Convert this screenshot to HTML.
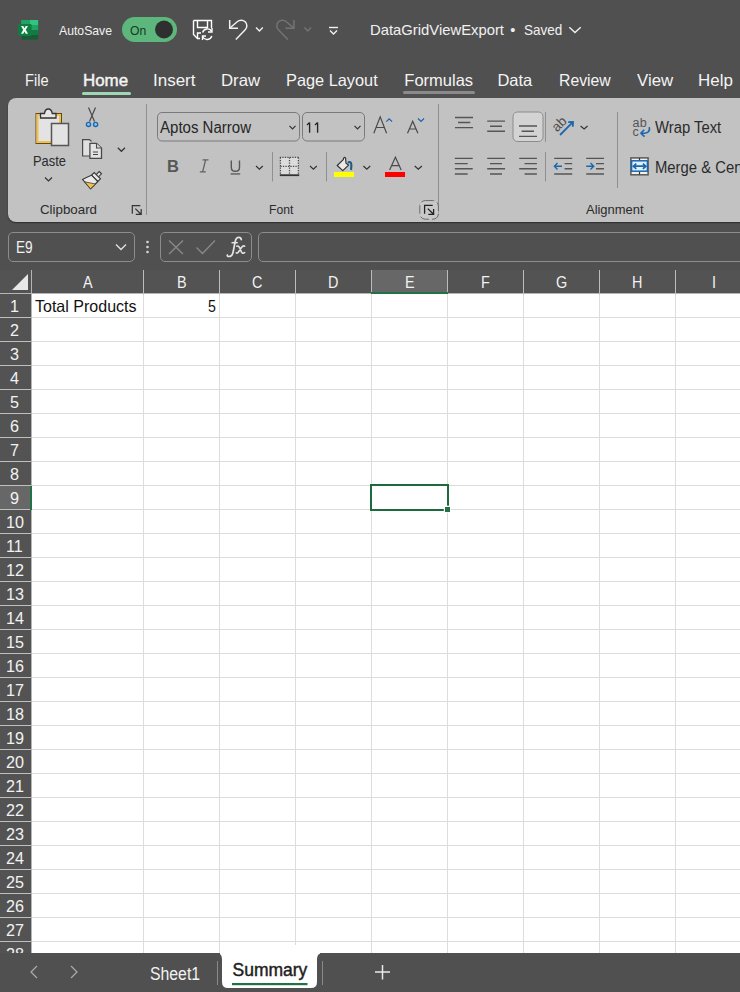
<!DOCTYPE html>
<html><head><meta charset="utf-8">
<style>
*{box-sizing:border-box;margin:0;padding:0}
html,body{width:740px;height:992px;overflow:hidden;background:#505050;font-family:"Liberation Sans",sans-serif}
.abs{position:absolute}
.t{position:absolute;white-space:nowrap;line-height:1;transform-origin:0 0}
</style></head><body>
<!-- ribbon panel -->
<div class="abs" style="left:8px;top:98px;width:760px;height:124px;background:#c2c2c2;border-radius:8px;box-shadow:0 1px 1.5px rgba(0,0,0,0.45)"></div>
<!-- tab underlines -->
<div class="abs" style="left:82px;top:92px;width:49px;height:3px;background:#9fd6b3;border-radius:2px"></div>
<div class="abs" style="left:403px;top:91px;width:72px;height:3px;background:#8a8a8a;border-radius:2px"></div>

<!-- formula bar boxes -->
<div class="abs" style="left:8px;top:232px;width:127px;height:30px;border:1px solid #8c8c8c;border-radius:5px"></div>
<div class="abs" style="left:160px;top:232px;width:92px;height:30px;border:1px solid #8c8c8c;border-radius:5px"></div>
<div class="abs" style="left:258px;top:232px;width:500px;height:30px;border:1px solid #8c8c8c;border-radius:5px"></div>

<svg class="abs" style="left:0;top:270px" width="740" height="683" viewBox="0 0 740 683">
<rect x="0" y="0" width="740" height="23" fill="#535353"/>
<rect x="372" y="0" width="75" height="23" fill="#676767"/>
<rect x="0" y="23" width="31" height="660" fill="#535353"/>
<rect x="0" y="216" width="31" height="24" fill="#676767"/>
<rect x="32" y="24" width="708" height="659" fill="#fff"/>
<line x1="32" x2="740" y1="47.5" y2="47.5" stroke="#dcdcdc"/>
<line x1="0" x2="31" y1="47.5" y2="47.5" stroke="#bfbfbf"/>
<line x1="32" x2="740" y1="71.5" y2="71.5" stroke="#dcdcdc"/>
<line x1="0" x2="31" y1="71.5" y2="71.5" stroke="#bfbfbf"/>
<line x1="32" x2="740" y1="95.5" y2="95.5" stroke="#dcdcdc"/>
<line x1="0" x2="31" y1="95.5" y2="95.5" stroke="#bfbfbf"/>
<line x1="32" x2="740" y1="119.5" y2="119.5" stroke="#dcdcdc"/>
<line x1="0" x2="31" y1="119.5" y2="119.5" stroke="#bfbfbf"/>
<line x1="32" x2="740" y1="143.5" y2="143.5" stroke="#dcdcdc"/>
<line x1="0" x2="31" y1="143.5" y2="143.5" stroke="#bfbfbf"/>
<line x1="32" x2="740" y1="167.5" y2="167.5" stroke="#dcdcdc"/>
<line x1="0" x2="31" y1="167.5" y2="167.5" stroke="#bfbfbf"/>
<line x1="32" x2="740" y1="191.5" y2="191.5" stroke="#dcdcdc"/>
<line x1="0" x2="31" y1="191.5" y2="191.5" stroke="#bfbfbf"/>
<line x1="32" x2="740" y1="215.5" y2="215.5" stroke="#dcdcdc"/>
<line x1="0" x2="31" y1="215.5" y2="215.5" stroke="#bfbfbf"/>
<line x1="32" x2="740" y1="239.5" y2="239.5" stroke="#dcdcdc"/>
<line x1="0" x2="31" y1="239.5" y2="239.5" stroke="#bfbfbf"/>
<line x1="32" x2="740" y1="263.5" y2="263.5" stroke="#dcdcdc"/>
<line x1="0" x2="31" y1="263.5" y2="263.5" stroke="#bfbfbf"/>
<line x1="32" x2="740" y1="287.5" y2="287.5" stroke="#dcdcdc"/>
<line x1="0" x2="31" y1="287.5" y2="287.5" stroke="#bfbfbf"/>
<line x1="32" x2="740" y1="311.5" y2="311.5" stroke="#dcdcdc"/>
<line x1="0" x2="31" y1="311.5" y2="311.5" stroke="#bfbfbf"/>
<line x1="32" x2="740" y1="335.5" y2="335.5" stroke="#dcdcdc"/>
<line x1="0" x2="31" y1="335.5" y2="335.5" stroke="#bfbfbf"/>
<line x1="32" x2="740" y1="359.5" y2="359.5" stroke="#dcdcdc"/>
<line x1="0" x2="31" y1="359.5" y2="359.5" stroke="#bfbfbf"/>
<line x1="32" x2="740" y1="383.5" y2="383.5" stroke="#dcdcdc"/>
<line x1="0" x2="31" y1="383.5" y2="383.5" stroke="#bfbfbf"/>
<line x1="32" x2="740" y1="407.5" y2="407.5" stroke="#dcdcdc"/>
<line x1="0" x2="31" y1="407.5" y2="407.5" stroke="#bfbfbf"/>
<line x1="32" x2="740" y1="431.5" y2="431.5" stroke="#dcdcdc"/>
<line x1="0" x2="31" y1="431.5" y2="431.5" stroke="#bfbfbf"/>
<line x1="32" x2="740" y1="455.5" y2="455.5" stroke="#dcdcdc"/>
<line x1="0" x2="31" y1="455.5" y2="455.5" stroke="#bfbfbf"/>
<line x1="32" x2="740" y1="479.5" y2="479.5" stroke="#dcdcdc"/>
<line x1="0" x2="31" y1="479.5" y2="479.5" stroke="#bfbfbf"/>
<line x1="32" x2="740" y1="503.5" y2="503.5" stroke="#dcdcdc"/>
<line x1="0" x2="31" y1="503.5" y2="503.5" stroke="#bfbfbf"/>
<line x1="32" x2="740" y1="527.5" y2="527.5" stroke="#dcdcdc"/>
<line x1="0" x2="31" y1="527.5" y2="527.5" stroke="#bfbfbf"/>
<line x1="32" x2="740" y1="551.5" y2="551.5" stroke="#dcdcdc"/>
<line x1="0" x2="31" y1="551.5" y2="551.5" stroke="#bfbfbf"/>
<line x1="32" x2="740" y1="575.5" y2="575.5" stroke="#dcdcdc"/>
<line x1="0" x2="31" y1="575.5" y2="575.5" stroke="#bfbfbf"/>
<line x1="32" x2="740" y1="599.5" y2="599.5" stroke="#dcdcdc"/>
<line x1="0" x2="31" y1="599.5" y2="599.5" stroke="#bfbfbf"/>
<line x1="32" x2="740" y1="623.5" y2="623.5" stroke="#dcdcdc"/>
<line x1="0" x2="31" y1="623.5" y2="623.5" stroke="#bfbfbf"/>
<line x1="32" x2="740" y1="647.5" y2="647.5" stroke="#dcdcdc"/>
<line x1="0" x2="31" y1="647.5" y2="647.5" stroke="#bfbfbf"/>
<line x1="32" x2="740" y1="671.5" y2="671.5" stroke="#dcdcdc"/>
<line x1="0" x2="31" y1="671.5" y2="671.5" stroke="#bfbfbf"/>
<line x1="143.5" x2="143.5" y1="24" y2="683" stroke="#dcdcdc"/>
<line x1="143.5" x2="143.5" y1="0" y2="23" stroke="#bcbcbc"/>
<line x1="219.5" x2="219.5" y1="24" y2="683" stroke="#dcdcdc"/>
<line x1="219.5" x2="219.5" y1="0" y2="23" stroke="#bcbcbc"/>
<line x1="295.5" x2="295.5" y1="24" y2="683" stroke="#dcdcdc"/>
<line x1="295.5" x2="295.5" y1="0" y2="23" stroke="#bcbcbc"/>
<line x1="371.5" x2="371.5" y1="24" y2="683" stroke="#dcdcdc"/>
<line x1="371.5" x2="371.5" y1="0" y2="23" stroke="#bcbcbc"/>
<line x1="447.5" x2="447.5" y1="24" y2="683" stroke="#dcdcdc"/>
<line x1="447.5" x2="447.5" y1="0" y2="23" stroke="#bcbcbc"/>
<line x1="523.5" x2="523.5" y1="24" y2="683" stroke="#dcdcdc"/>
<line x1="523.5" x2="523.5" y1="0" y2="23" stroke="#bcbcbc"/>
<line x1="599.5" x2="599.5" y1="24" y2="683" stroke="#dcdcdc"/>
<line x1="599.5" x2="599.5" y1="0" y2="23" stroke="#bcbcbc"/>
<line x1="675.5" x2="675.5" y1="24" y2="683" stroke="#dcdcdc"/>
<line x1="675.5" x2="675.5" y1="0" y2="23" stroke="#bcbcbc"/>
<line x1="31.5" x2="31.5" y1="0" y2="683" stroke="#b5b5b5"/>
<line x1="0" x2="740" y1="23.5" y2="23.5" stroke="#b5b5b5"/>
<polygon points="12,20 28,20 28,4" fill="#e8e8e8"/>
<rect x="371" y="22" width="77" height="2" fill="#217346"/>
<rect x="30" y="216" width="2" height="24" fill="#217346"/>
<rect x="371" y="215" width="77" height="25" fill="none" stroke="#1d6b3d" stroke-width="2"/>
<rect x="443.8" y="235.7" width="7" height="7" fill="#fff"/>
<rect x="445" y="237" width="5" height="5" fill="#217346"/>
</svg>

<!-- sheet tab bar -->
<svg class="abs" style="left:0;top:945px;z-index:5" width="740" height="47" viewBox="0 945 740 47">
<rect x="220" y="945" width="100" height="45" fill="#fff"/>
<path d="M0 953 H216 Q222 953 222 959 V982 Q222 988 228 988 H311 Q317 988 317 982 V959 Q317 953 323 953 H740 V992 H0 Z" fill="#505050"/>
<line x1="217.5" y1="961" x2="217.5" y2="985" stroke="#8a8a8a" stroke-width="1"/>
<line x1="322.5" y1="961" x2="322.5" y2="985" stroke="#8a8a8a" stroke-width="1"/>
<rect x="232" y="983" width="75.5" height="2.2" fill="#1f7244"/>
<path d="M37 966 L31 972 L37 978" fill="none" stroke="#a8a8a8" stroke-width="1.3"/>
<path d="M71 966 L77 972 L71 978" fill="none" stroke="#a8a8a8" stroke-width="1.3"/>
<path d="M375 972 H390 M382.5 965 V979.5" stroke="#e8e8e8" stroke-width="1.5"/>
</svg>

<!-- title bar + ribbon icons (page coords) -->
<svg class="abs" style="left:0;top:0" width="740" height="270" viewBox="0 0 740 270">
<!-- excel logo -->
<rect x="21.5" y="20" width="16.7" height="19.7" rx="1.2" fill="#185c37"/>
<rect x="21.5" y="20" width="16.7" height="5" fill="#33c481"/>
<rect x="21.5" y="20" width="8.5" height="5" fill="#21a366"/>
<rect x="21.5" y="25" width="16.7" height="5" fill="#21a366"/>
<rect x="21.5" y="30" width="16.7" height="5" fill="#107c41"/>
<rect x="17.9" y="23.9" width="13.7" height="12" rx="1.3" fill="#107c41"/>
<path d="M21 25.9 H23.3 L24.5 28.2 L25.7 25.9 H28 L25.8 29.8 L28 33.8 H25.7 L24.5 31.4 L23.3 33.8 H21 L23.2 29.8 Z" fill="#f0fff5"/>
<!-- toggle -->
<rect x="122" y="17" width="55" height="25" rx="12.5" fill="#5db67b"/>
<circle cx="164" cy="29.5" r="9" fill="#2f2f2f"/>
<!-- save icon -->
<path d="M193.5 20.5 H211.5 V28 M193.5 20.5 V34.5 L197.5 38.5 H200" fill="none" stroke="#fff" stroke-width="1.4"/>
<path d="M197.5 20.5 V27.5 H207.5 V20.5" fill="none" stroke="#fff" stroke-width="1.4"/>
<path d="M197.5 38.5 V33 H201" fill="none" stroke="#fff" stroke-width="1.4"/>
<path d="M202.6 32.5 A5 5 0 0 1 211.5 31" fill="none" stroke="#fff" stroke-width="1.4"/>
<path d="M211.8 36 A5 5 0 0 1 202.7 37" fill="none" stroke="#fff" stroke-width="1.4"/>
<path d="M212 28 V32 H208" fill="none" stroke="#fff" stroke-width="1.4"/>
<path d="M202.5 40 V36 H206" fill="none" stroke="#fff" stroke-width="1.4"/>
<!-- undo -->
<path d="M229.7 20 V28.2 H238" fill="none" stroke="#f0f0f0" stroke-width="1.5"/>
<path d="M230.2 27.7 L237.2 21.8 A5.6 5.6 0 0 1 245.2 29.76 L235.8 39.4" fill="none" stroke="#f0f0f0" stroke-width="1.5"/>
<path d="M256 27.6 L259.4 31 L262.8 27.6" fill="none" stroke="#f0f0f0" stroke-width="1.4"/>
<!-- redo (disabled) -->
<g transform="translate(523.6 0) scale(-1 1)">
<path d="M229.7 20 V28.2 H238" fill="none" stroke="#747474" stroke-width="1.5"/>
<path d="M230.2 27.7 L237.2 21.8 A5.6 5.6 0 0 1 245.2 29.76 L235.8 39.4" fill="none" stroke="#747474" stroke-width="1.5"/>
</g>
<path d="M304.5 27.6 L307.8 31 L311.1 27.6" fill="none" stroke="#747474" stroke-width="1.4"/>
<!-- customize -->
<path d="M329 27.5 H338" stroke="#f0f0f0" stroke-width="1.4"/>
<path d="M330 30.5 L333.5 34 L337 30.5" fill="none" stroke="#f0f0f0" stroke-width="1.4"/>
<!-- title chevron -->
<path d="M569.3 27.2 L575 32.6 L580.7 27.2" fill="none" stroke="#f0f0f0" stroke-width="1.4"/>

<!-- ===== Clipboard group ===== -->
<rect x="36" y="113.5" width="25.5" height="30" fill="#e3e3e3" stroke="#5e4a1e" stroke-width="1"/>
<rect x="37.5" y="115" width="22.5" height="27" fill="none" stroke="#f1c04a" stroke-width="2"/>
<rect x="39" y="116.5" width="19.5" height="24" fill="#e3e3e3"/>
<path d="M40.5 118 V113.5 H44.5 Q45 109 48.3 109 Q51.6 109 52.2 113.5 H56 V118 Z" fill="#e6e6e6" stroke="#333" stroke-width="1.3"/>
<rect x="51.5" y="123.5" width="17" height="22" fill="#e3e3e3" stroke="#555" stroke-width="1.5"/>
<!-- paste chevron -->
<path d="M45 177.5 L48.5 181 L52 177.5" fill="none" stroke="#333" stroke-width="1.2"/>
<!-- scissors -->
<path d="M88.5 107.5 L94.5 121.5 M95.5 107.5 L89.5 121.5" stroke="#4a4a4a" stroke-width="1.2"/>
<circle cx="88.5" cy="124.4" r="2.1" fill="#7ec8ff" stroke="#1b67ab" stroke-width="1.3"/>
<circle cx="95.6" cy="124.4" r="2.1" fill="#7ec8ff" stroke="#1b67ab" stroke-width="1.3"/>
<!-- copy -->
<path d="M90 156 H82.6 V139.6 H89.5 L91.5 141.5" fill="#e0e0e0" stroke="#4a4a4a" stroke-width="1.2"/>
<path d="M89.9 143.3 H96.5 L101.5 148 V158.3 H89.9 Z" fill="#e3e3e3" stroke="#4a4a4a" stroke-width="1.3"/>
<path d="M96.5 143.5 V148 H101.3" fill="#d8d8d8" stroke="#4a4a4a" stroke-width="1.1"/>
<path d="M93 152 H98 M93 154.5 H98" stroke="#444" stroke-width="1"/>
<path d="M117.8 147.8 L121.4 151.3 L125 147.8" fill="none" stroke="#333" stroke-width="1.2"/>
<!-- format painter -->
<path d="M99.2 171.5 L101.5 173.8 L97.5 177.8 L95.2 175.5 Z" fill="#e6e6e6" stroke="#3a3a3a" stroke-width="1.1"/>
<path d="M91.5 175.2 L94.2 172.5 L100.5 178.8 L97.8 181.5 Z" fill="#e6e6e6" stroke="#3a3a3a" stroke-width="1.1"/>
<path d="M91.5 175.2 Q86 177.5 82.5 179.4 L90.5 188.8 Q94.5 185 97.8 181.5 Z" fill="#e9e9e9" stroke="#3a3a3a" stroke-width="1.1"/>
<path d="M84.6 181.8 L95.5 184 L90.5 188.8 Z" fill="#f2c14e" stroke="#3a3a3a" stroke-width="0.8"/>
<!-- launcher -->
<path d="M132.3 213.8 V205.6 H140.3 M135.3 208.6 L140.8 214 M135.8 214.3 H141.2 V209" fill="none" stroke="#333" stroke-width="1.2"/>
<!-- separators -->
<line x1="146.5" y1="104" x2="146.5" y2="215" stroke="#8f8f8f"/>
<line x1="438.5" y1="104" x2="438.5" y2="214.6" stroke="#8f8f8f"/>
<line x1="617.5" y1="112" x2="617.5" y2="188" stroke="#8f8f8f"/>

<!-- ===== Font group ===== -->
<rect x="157.5" y="112.5" width="142" height="28.5" rx="4.5" fill="none" stroke="#7a7a7a"/>
<path d="M289.5 125.8 L292.5 128.8 L295.5 125.8" fill="none" stroke="#333" stroke-width="1.2"/>
<rect x="302.5" y="112.5" width="62" height="28.5" rx="4.5" fill="none" stroke="#7a7a7a"/>
<path d="M309.6 122.4 V132.8 M306.9 124.8 Q308.6 124 309.6 122.4 M317.6 122.4 V132.8 M314.9 124.8 Q316.6 124 317.6 122.4" fill="none" stroke="#262626" stroke-width="1.35"/>
<path d="M354.5 125.8 L357.5 128.8 L360.5 125.8" fill="none" stroke="#333" stroke-width="1.2"/>
<!-- grow/shrink -->
<path d="M373.8 133.2 L380.2 116.8 L386.6 133.2 M376.2 127.5 H384.2" fill="none" stroke="#4a4a4a" stroke-width="1.2"/>
<path d="M386.3 121.6 L389.2 118.8 L392.1 121.6" fill="none" stroke="#1b67ab" stroke-width="1.3"/>
<path d="M407.5 133.2 L412.7 121.2 L417.9 133.2 M409.5 129 H416" fill="none" stroke="#4a4a4a" stroke-width="1.2"/>
<path d="M418 118.5 L421 121.4 L424 118.5" fill="none" stroke="#1b67ab" stroke-width="1.3"/>
<!-- B I U -->
<text x="167" y="171.9" font-family="Liberation Sans" font-weight="bold" font-size="16.5" fill="#575757">B</text>
<path d="M202.5 159.8 H208.5 M199.8 171.8 H205.8 M205.6 159.8 L202.6 171.8" fill="none" stroke="#626262" stroke-width="1.3"/>
<path d="M231.3 160.4 V167.5 Q231.3 171.3 235.4 171.3 Q239.5 171.3 239.5 167.5 V160.4" fill="none" stroke="#575757" stroke-width="1.4"/>
<rect x="230.6" y="173.3" width="9.6" height="1.3" fill="#575757"/>
<path d="M256 166 L259.4 169.2 L262.8 166" fill="none" stroke="#333" stroke-width="1.2"/>
<line x1="272.5" y1="152" x2="272.5" y2="181.5" stroke="#8f8f8f"/>
<!-- borders -->
<rect x="280.5" y="157.5" width="18" height="17.5" fill="#dcdcdc"/>
<g fill="none" stroke="#4a4a4a" stroke-width="1.3" stroke-dasharray="1.3 1.2">
<path d="M279.8 157.4 H299.5 M280.4 157.4 V175 M298.4 157.4 V175 M289.5 157.4 V175 M280.4 166.3 H298.4"/>
</g>
<rect x="279.8" y="174.3" width="19.4" height="1.8" fill="#333"/>
<path d="M310 166 L313.4 169.2 L316.8 166" fill="none" stroke="#333" stroke-width="1.2"/>
<line x1="326.5" y1="152" x2="326.5" y2="181.5" stroke="#8f8f8f"/>
<!-- fill color -->
<path d="M337.2 165.5 L343.3 159.6 L343.6 158.2 Q344.6 156.6 345.6 158.2 L346 163.3 L348.6 165.1 L342.8 170.6 Z" fill="#e9e9e9" stroke="#333" stroke-width="1.2" stroke-linejoin="round"/>
<path d="M348.6 162.3 Q351.3 161.2 351.4 165.5 L351.1 169.2" fill="none" stroke="#1b5a8c" stroke-width="2.1" stroke-linecap="round"/>
<rect x="334" y="172" width="20" height="5" fill="#ffff00"/>
<path d="M363.4 166 L366.8 169.2 L370.2 166" fill="none" stroke="#333" stroke-width="1.2"/>
<!-- font color -->
<path d="M389.6 169.9 L395.4 157.3 L401.2 169.9 M391.8 165.6 H399" fill="none" stroke="#4a4a4a" stroke-width="1.2"/>
<rect x="385" y="172" width="20" height="5" fill="#ff0000"/>
<path d="M414.7 166 L418.3 169.2 L421.9 166" fill="none" stroke="#333" stroke-width="1.2"/>
<!-- font launcher w/ focus ring -->
<rect x="419.8" y="200.6" width="18.6" height="18.6" rx="5.5" fill="#c9c9c9" stroke="#6a6a6a" stroke-width="1" stroke-dasharray="9 3"/>
<path d="M424.6 213.8 V205.4 H432.7 M427.8 208.6 L433.3 214 M428.3 214.3 H433.6 V209" fill="none" stroke="#222" stroke-width="1.3"/>

<!-- ===== Alignment group ===== -->
<g stroke="#555" stroke-width="1.4">
<path d="M455 117.5 H473 M458 122.5 H470.3 M455 127.6 H473"/>
<path d="M487.2 121.1 H505 M490 126.2 H502 M487.2 131.2 H505"/>
</g>
<rect x="513" y="112" width="30" height="29.5" rx="4.5" fill="#d3d3d3" stroke="#8c8c8c"/>
<g stroke="#555" stroke-width="1.4">
<path d="M519 126 H537 M521.6 131.2 H534 M519 136.4 H537"/>
<path d="M454.8 158.4 H472.7 M454.8 163.6 H467.7 M454.8 168.8 H472.7 M454.8 174 H467.7"/>
<path d="M487.2 158.4 H505.1 M490 163.6 H502 M487.2 168.8 H505.1 M490 174 H502"/>
<path d="M519.2 158.4 H536.9 M524.6 163.6 H536.9 M519.2 168.8 H536.9 M524.6 174 H536.9"/>
<path d="M554.2 158.4 H572.2 M564.6 163.6 H572.2 M564.6 168.8 H572.2 M554.2 174 H572.2"/>
<path d="M586.2 158.4 H604 M596 163.6 H604 M596 168.8 H604 M586.2 174 H604"/>
</g>
<line x1="545.5" y1="112" x2="545.5" y2="142" stroke="#8f8f8f"/>
<line x1="545.5" y1="152" x2="545.5" y2="181.5" stroke="#8f8f8f"/>
<path d="M562 166.2 H554.5 M557.5 163 L554.4 166.2 L557.5 169.4" fill="none" stroke="#1b67ab" stroke-width="1.4"/>
<path d="M586.2 166.2 H593.6 M590.5 163 L593.7 166.2 L590.5 169.4" fill="none" stroke="#1b67ab" stroke-width="1.4"/>
<!-- orientation ab -->
<text x="0" y="0" font-family="Liberation Sans" font-size="13.5" fill="#505050" transform="translate(557,132.5) rotate(-45)">ab</text>
<path d="M560 135 L572.3 122.7" fill="none" stroke="#1b67ab" stroke-width="1.8"/>
<path d="M568.2 122.2 L573 121.9 L572.8 126.8" fill="none" stroke="#1b67ab" stroke-width="1.8"/>
<path d="M580.6 126 L584.1 129 L587.6 126" fill="none" stroke="#333" stroke-width="1.2"/>
<!-- wrap text icon -->
<text x="632.6" y="126.5" font-family="Liberation Sans" font-size="12.5" letter-spacing="0.3" fill="#555">ab</text>
<text x="632.6" y="135.6" font-family="Liberation Sans" font-size="12.5" fill="#555">c</text>
<path d="M649.3 127.2 Q650.5 133 644.5 133.2 H641.2 M644.2 129.8 L640.9 133.2 L644.5 136.6" fill="none" stroke="#1b67ab" stroke-width="1.6"/>
<!-- merge icon -->
<rect x="630.9" y="157.9" width="17.2" height="16.9" fill="#f0f0f0" stroke="#5a5a5a" stroke-width="1.5"/>
<rect x="631.6" y="160.8" width="15.8" height="10.4" fill="#dff0ff" stroke="#1b67ab" stroke-width="1.5"/>
<path d="M639.5 158 V160 M639.5 172 V174.5" stroke="#333" stroke-width="1.2"/>
<path d="M633.5 166.2 H645.7 M636.3 163.6 L633.4 166.2 L636.3 168.8 M642.9 163.6 L645.8 166.2 L642.9 168.8" fill="none" stroke="#1b67ab" stroke-width="1.7"/>

<!-- formula bar icons -->
<circle cx="147.5" cy="242" r="1.3" fill="#d8d8d8"/>
<circle cx="147.5" cy="247" r="1.3" fill="#d8d8d8"/>
<circle cx="147.5" cy="252" r="1.3" fill="#d8d8d8"/>
<path d="M169 240.5 L183 254 M183 240.5 L169 254" stroke="#8a8a8a" stroke-width="1.3"/>
<path d="M196.5 247.5 L202.5 253.5 L215 240.5" fill="none" stroke="#8a8a8a" stroke-width="1.3"/>
<path d="M241.3 239.6 Q241 237.2 238.4 237.4 Q235.9 237.7 235.1 241.8 L233.1 252.2 Q232.2 256.6 228.8 256.5 Q227.1 256.4 227.3 255" fill="none" stroke="#e6e6e6" stroke-width="1.7" stroke-linecap="round"/>
<path d="M231.5 242.7 H237.8" stroke="#e6e6e6" stroke-width="1.5"/>
<path d="M236.8 246.2 Q238.8 245.2 240 248.5 L241.4 251.8 Q242.6 254.2 244.6 252.6 M244.6 246.2 Q243.2 245.3 241.5 247.5 L239 251.2 Q237.6 253.8 236.3 252.8" fill="none" stroke="#e6e6e6" stroke-width="1.6" stroke-linecap="round"/>
<!-- name box chevron -->
<path d="M116 244.5 L121 249.5 L126 244.5" fill="none" stroke="#e0e0e0" stroke-width="1.4"/>
</svg>

<div class="t" style="left:59.0px;top:24.07px;font-size:13.5px;color:#f0f0f0;font-weight:normal;transform:scaleX(0.905);">AutoSave</div>
<div class="t" style="left:130.4px;top:24.72px;font-size:12.5px;color:#173a24;font-weight:normal;transform:scaleX(0.972);">On</div>
<div class="t" style="left:369.7px;top:23.33px;font-size:14.5px;color:#f0f0f0;font-weight:normal;transform:scaleX(1.022);">DataGridViewExport</div>
<div class="t" style="left:510.3px;top:23.33px;font-size:14.5px;color:#f0f0f0;font-weight:normal;">•</div>
<div class="t" style="left:523.7px;top:23.33px;font-size:14.5px;color:#f0f0f0;font-weight:normal;transform:scaleX(0.932);">Saved</div>
<div class="t" style="left:24.8px;top:71.53px;font-size:16.5px;color:#f4f4f4;font-weight:normal;transform:scaleX(0.884);">File</div>
<div class="t" style="left:83.0px;top:71.53px;font-size:16.5px;color:#f4f4f4;font-weight:normal;-webkit-text-stroke:0.45px #f4f4f4;transform:scaleX(1.025);">Home</div>
<div class="t" style="left:153.2px;top:71.53px;font-size:16.5px;color:#f4f4f4;font-weight:normal;transform:scaleX(1.030);">Insert</div>
<div class="t" style="left:221.4px;top:71.53px;font-size:16.5px;color:#f4f4f4;font-weight:normal;transform:scaleX(1.016);">Draw</div>
<div class="t" style="left:285.5px;top:71.53px;font-size:16.5px;color:#f4f4f4;font-weight:normal;transform:scaleX(0.990);">Page Layout</div>
<div class="t" style="left:404.3px;top:71.53px;font-size:16.5px;color:#f4f4f4;font-weight:normal;">Formulas</div>
<div class="t" style="left:497.4px;top:71.53px;font-size:16.5px;color:#f4f4f4;font-weight:normal;">Data</div>
<div class="t" style="left:559.3px;top:71.53px;font-size:16.5px;color:#f4f4f4;font-weight:normal;transform:scaleX(0.956);">Review</div>
<div class="t" style="left:637.0px;top:71.53px;font-size:16.5px;color:#f4f4f4;font-weight:normal;transform:scaleX(1.018);">View</div>
<div class="t" style="left:697.8px;top:71.53px;font-size:16.5px;color:#f4f4f4;font-weight:normal;transform:scaleX(1.026);">Help</div>
<div class="t" style="left:33.0px;top:152.80px;font-size:15px;color:#2b2b2b;font-weight:normal;transform:scaleX(0.860);">Paste</div>
<div class="t" style="left:40.3px;top:203.37px;font-size:13.5px;color:#2b2b2b;font-weight:normal;transform:scaleX(0.986);">Clipboard</div>
<div class="t" style="left:269.0px;top:203.37px;font-size:13.5px;color:#2b2b2b;font-weight:normal;transform:scaleX(0.900);">Font</div>
<div class="t" style="left:585.7px;top:203.37px;font-size:13.5px;color:#2b2b2b;font-weight:normal;transform:scaleX(0.958);">Alignment</div>
<div class="t" style="left:160.0px;top:119.56px;font-size:16px;color:#262626;font-weight:normal;transform:scaleX(0.939);">Aptos Narrow</div>
<div class="t" style="left:655.0px;top:119.56px;font-size:16px;color:#2b2b2b;font-weight:normal;transform:scaleX(0.927);">Wrap Text</div>
<div class="t" style="left:655.0px;top:159.86px;font-size:16px;color:#2b2b2b;font-weight:normal;transform:scaleX(0.927);">Merge &amp; Center</div>
<div class="t" style="left:16.0px;top:238.73px;font-size:16.5px;color:#f2f2f2;font-weight:normal;transform:scaleX(0.827);">E9</div>
<div class="t" style="left:35.3px;top:298.03px;font-size:16.5px;color:#111;font-weight:normal;transform:scaleX(0.971);">Total Products</div>
<div class="t" style="left:207.6px;top:298.03px;font-size:16.5px;color:#111;font-weight:normal;transform:scaleX(0.861);">5</div>
<div class="t" style="left:149.5px;top:965.89px;font-size:17.5px;color:#f2f2f2;font-weight:normal;transform:scaleX(0.903);z-index:6;">Sheet1</div>
<div class="t" style="left:232.5px;top:961.69px;font-size:17.5px;color:#1e1e1e;font-weight:normal;z-index:6;-webkit-text-stroke:0.45px #1e1e1e;">Summary</div>
<div class="t" style="left:82.7px;top:275.26px;font-size:16px;color:#f2f2f2;transform:scaleX(0.9)">A</div>
<div class="t" style="left:176.7px;top:275.26px;font-size:16px;color:#f2f2f2;transform:scaleX(0.9)">B</div>
<div class="t" style="left:252.3px;top:275.26px;font-size:16px;color:#f2f2f2;transform:scaleX(0.9)">C</div>
<div class="t" style="left:328.3px;top:275.26px;font-size:16px;color:#f2f2f2;transform:scaleX(0.9)">D</div>
<div class="t" style="left:404.7px;top:275.26px;font-size:16px;color:#f2f2f2;transform:scaleX(0.9)">E</div>
<div class="t" style="left:481.1px;top:275.26px;font-size:16px;color:#f2f2f2;transform:scaleX(0.9)">F</div>
<div class="t" style="left:555.9px;top:275.26px;font-size:16px;color:#f2f2f2;transform:scaleX(0.9)">G</div>
<div class="t" style="left:632.3px;top:275.26px;font-size:16px;color:#f2f2f2;transform:scaleX(0.9)">H</div>
<div class="t" style="left:711.5px;top:275.26px;font-size:16px;color:#f2f2f2;transform:scaleX(0.9)">I</div>
<div class="t" style="left:10.2px;top:297.51px;font-size:17px;color:#f2f2f2;transform:scaleX(0.95)">1</div>
<div class="t" style="left:10.2px;top:321.51px;font-size:17px;color:#f2f2f2;transform:scaleX(0.95)">2</div>
<div class="t" style="left:10.2px;top:345.51px;font-size:17px;color:#f2f2f2;transform:scaleX(0.95)">3</div>
<div class="t" style="left:10.2px;top:369.51px;font-size:17px;color:#f2f2f2;transform:scaleX(0.95)">4</div>
<div class="t" style="left:10.2px;top:393.51px;font-size:17px;color:#f2f2f2;transform:scaleX(0.95)">5</div>
<div class="t" style="left:10.2px;top:417.51px;font-size:17px;color:#f2f2f2;transform:scaleX(0.95)">6</div>
<div class="t" style="left:10.2px;top:441.51px;font-size:17px;color:#f2f2f2;transform:scaleX(0.95)">7</div>
<div class="t" style="left:10.2px;top:465.51px;font-size:17px;color:#f2f2f2;transform:scaleX(0.95)">8</div>
<div class="t" style="left:10.2px;top:489.51px;font-size:17px;color:#f2f2f2;transform:scaleX(0.95)">9</div>
<div class="t" style="left:5.7px;top:513.51px;font-size:17px;color:#f2f2f2;transform:scaleX(0.95)">10</div>
<div class="t" style="left:6.3px;top:537.51px;font-size:17px;color:#f2f2f2;transform:scaleX(0.95)">11</div>
<div class="t" style="left:5.7px;top:561.51px;font-size:17px;color:#f2f2f2;transform:scaleX(0.95)">12</div>
<div class="t" style="left:5.7px;top:585.51px;font-size:17px;color:#f2f2f2;transform:scaleX(0.95)">13</div>
<div class="t" style="left:5.7px;top:609.51px;font-size:17px;color:#f2f2f2;transform:scaleX(0.95)">14</div>
<div class="t" style="left:5.7px;top:633.51px;font-size:17px;color:#f2f2f2;transform:scaleX(0.95)">15</div>
<div class="t" style="left:5.7px;top:657.51px;font-size:17px;color:#f2f2f2;transform:scaleX(0.95)">16</div>
<div class="t" style="left:5.7px;top:681.51px;font-size:17px;color:#f2f2f2;transform:scaleX(0.95)">17</div>
<div class="t" style="left:5.7px;top:705.51px;font-size:17px;color:#f2f2f2;transform:scaleX(0.95)">18</div>
<div class="t" style="left:5.7px;top:729.51px;font-size:17px;color:#f2f2f2;transform:scaleX(0.95)">19</div>
<div class="t" style="left:5.7px;top:753.51px;font-size:17px;color:#f2f2f2;transform:scaleX(0.95)">20</div>
<div class="t" style="left:5.7px;top:777.51px;font-size:17px;color:#f2f2f2;transform:scaleX(0.95)">21</div>
<div class="t" style="left:5.7px;top:801.51px;font-size:17px;color:#f2f2f2;transform:scaleX(0.95)">22</div>
<div class="t" style="left:5.7px;top:825.51px;font-size:17px;color:#f2f2f2;transform:scaleX(0.95)">23</div>
<div class="t" style="left:5.7px;top:849.51px;font-size:17px;color:#f2f2f2;transform:scaleX(0.95)">24</div>
<div class="t" style="left:5.7px;top:873.51px;font-size:17px;color:#f2f2f2;transform:scaleX(0.95)">25</div>
<div class="t" style="left:5.7px;top:897.51px;font-size:17px;color:#f2f2f2;transform:scaleX(0.95)">26</div>
<div class="t" style="left:5.7px;top:921.51px;font-size:17px;color:#f2f2f2;transform:scaleX(0.95)">27</div>
<div class="t" style="left:5.7px;top:945.51px;font-size:17px;color:#f2f2f2;transform:scaleX(0.95)">28</div>
</body></html>
